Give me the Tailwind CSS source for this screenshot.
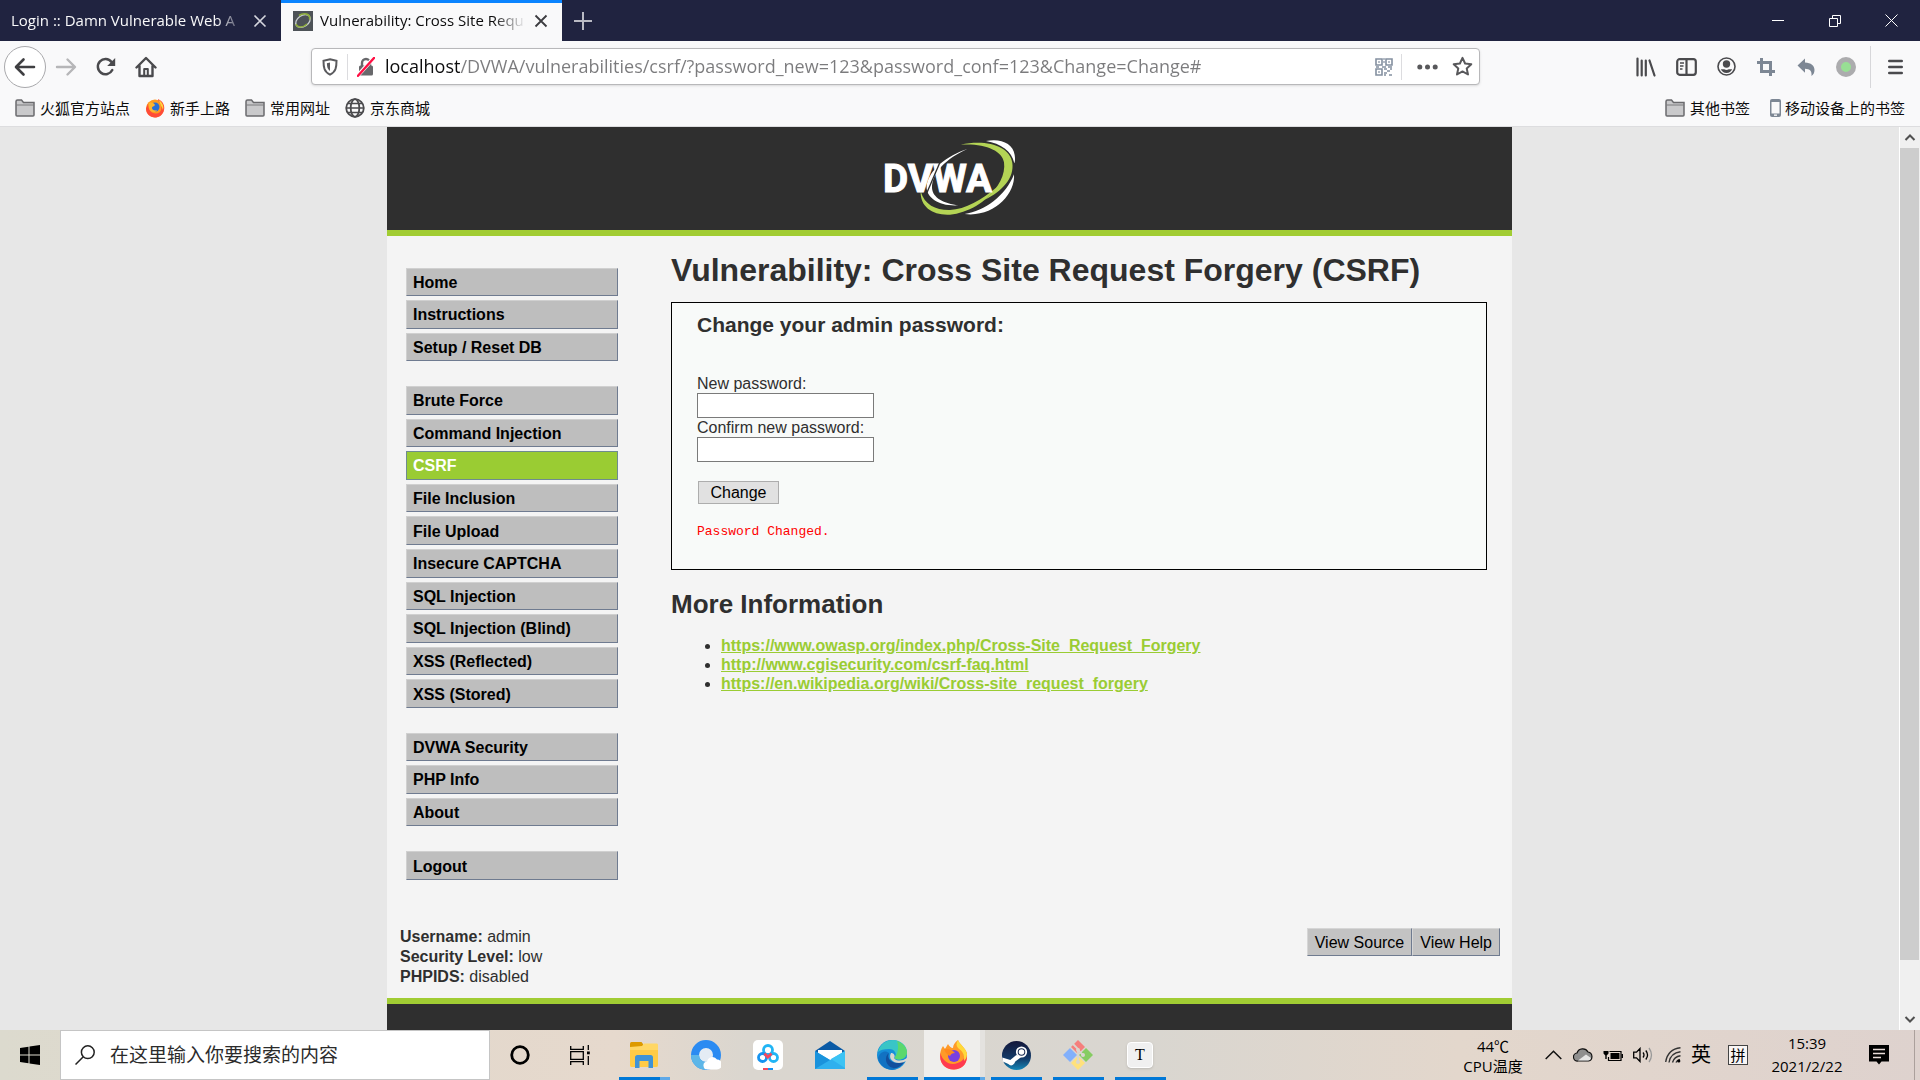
<!DOCTYPE html>
<html lang="zh-CN">
<head>
<meta charset="utf-8">
<title>Vulnerability: Cross Site Request Forgery (CSRF)</title>
<script src="https://cdn.jsdelivr.net/npm/@tailwindcss/browser@4"></script>
</head>
<body class="flex h-screen flex-col overflow-hidden bg-[#f9f9fa] font-['Open_Sans','Noto_Sans_CJK_SC',sans-serif] text-[15px] text-[#0c0c0d]">

<!-- Tab strip -->
<header class="shrink-0">
  <div class="flex h-[41px] items-stretch bg-[#202340] text-[#f9f9fa]">
    <div class="flex w-[281px] items-center pr-[14px] pl-[11px]">
      <span class="flex-1 whitespace-nowrap [mask-image:linear-gradient(to_right,black_88%,transparent)]">Login :: Damn Vulnerable Web A</span>
      <button aria-label="关闭标签页" class="ml-2"><svg class="size-[14px]" viewBox="0 0 14 14" fill="none" stroke="#d5d6de" stroke-width="1.6"><path d="M1.500 1.500l11 11M12.500 1.500l-11 11"/></svg></button>
    </div>
    <div class="flex w-[281px] items-center border-t-[3px] border-[#0a84ff] bg-[#f9f9fa] pr-[14px] pb-[3px] pl-3 text-[#0c0c0d]">
      <svg class="size-5 shrink-0" viewBox="0 0 20 20"><rect width="20" height="20" fill="#4d5257"/><ellipse cx="10" cy="10" rx="8" ry="5.500" transform="rotate(-35 10 10)" fill="none" stroke="#c9ced0" stroke-width="1.300"/><path d="M6 4.500C11 1 18 3 16.500 8.500" fill="none" stroke="#8fae3c" stroke-width="1.600"/><path d="M3 13c1 4 7 4 11 0" fill="none" stroke="#8fae3c" stroke-width="1.400"/></svg>
      <span class="ml-[7px] flex-1 whitespace-nowrap [mask-image:linear-gradient(to_right,black_84%,transparent)]">Vulnerability: Cross Site Requ</span>
      <button aria-label="关闭标签页" class="ml-2"><svg class="size-[14px]" viewBox="0 0 14 14" fill="none" stroke="#3c3c40" stroke-width="1.800"><path d="M1.500 1.500l11 11M12.500 1.500l-11 11"/></svg></button>
    </div>
    <button aria-label="新建标签页" class="px-3"><svg class="size-[18px]" viewBox="0 0 18 18" stroke="#b9bac4" stroke-width="2"><path d="M9 0v18M0 9h18"/></svg></button>
    <div class="ml-auto flex">
      <button aria-label="最小化" class="grid w-[57px] place-items-center"><svg class="size-3" viewBox="0 0 12 12" stroke="#fff"><path d="M0 5.500h12"/></svg></button>
      <button aria-label="还原" class="grid w-[57px] place-items-center"><svg class="size-3" viewBox="0 0 12 12" fill="none" stroke="#fff"><path d="M.5 3.500h8v8h-8zM3.500 3.500v-3h8v8h-3"/></svg></button>
      <button aria-label="关闭" class="grid w-[57px] place-items-center"><svg class="size-[13px]" viewBox="0 0 13 13" stroke="#fff"><path d="M.5.5l12 12M12.500.5l-12 12"/></svg></button>
    </div>
  </div>

  <!-- Navigation toolbar -->
  <div class="flex h-[51px] items-center pl-1">
    <button aria-label="后退" class="grid size-[42px] place-items-center rounded-full border border-[#a9a9ac] bg-white"><svg class="h-5 w-[22px]" viewBox="0 0 22 20" fill="none" stroke="#3f3f42" stroke-width="2.600" stroke-linecap="round" stroke-linejoin="round"><path d="M20 10H2.500M9.500 2.500L2 10l7.500 7.500"/></svg></button>
    <button aria-label="前进" class="grid w-10 place-items-center"><svg class="h-5 w-[22px]" viewBox="0 0 22 20" fill="none" stroke="#b6b6b8" stroke-width="2.400" stroke-linecap="round" stroke-linejoin="round"><path d="M2 10h17.500M12.500 2.500L20 10l-7.500 7.500"/></svg></button>
    <button aria-label="重新载入" class="grid w-10 place-items-center"><svg class="size-5" viewBox="0 0 20 20"><path d="M16.300 13A7.600 7.600 0 1 1 15.500 5" fill="none" stroke="#4a4a4d" stroke-width="2.500" stroke-linecap="round"/><path d="M19.200 1v8h-8z" fill="#4a4a4d"/></svg></button>
    <button aria-label="主页" class="grid w-10 place-items-center"><svg class="size-[22px]" viewBox="0 0 22 22" fill="none" stroke="#4a4a4d" stroke-width="2.400" stroke-linecap="round" stroke-linejoin="round"><path d="M1.500 11.500L11 2l9.500 9.500M4.500 10v10h13V10"/><path d="M9.200 20v-7h3.600v7" stroke-width="2"/></svg></button>
    <div class="mr-[146px] ml-[145px] flex h-[37px] flex-1 items-center rounded-sm border border-[#b8b8ba] bg-white px-[10px] shadow-sm">
      <svg class="h-[18px] w-4" viewBox="0 0 16 18"><path d="M8 1.200l6.500 1.500c0 6.500-.5 11-6.500 14C2 13.700 1.500 9.200 1.500 2.700z" fill="none" stroke="#5a5a5d" stroke-width="2"/><path d="M8 4.500v8.500c-2.500-1.800-3-4-3.100-7.800z" fill="#5a5a5d"/></svg>
      <span class="mx-[9px] h-[26px] w-px bg-[#dcdcdf]"></span>
      <svg class="h-5 w-[18px]" viewBox="0 0 18 20"><path d="M5 9V6a4 4 0 0 1 8 0v3" fill="none" stroke="#68686b" stroke-width="2.400"/><rect x="2" y="8.500" width="14" height="10" rx="1.500" fill="#68686b"/><path d="M.8 18.500L16.800.8" stroke="#fff" stroke-width="4"/><path d="M1 18.800L17 1" stroke="#ff0f43" stroke-width="2.400" stroke-linecap="round"/></svg>
      <!-- The host part of the address is darker than the path -->
      <input type="text" aria-label="地址栏" spellcheck="false" value="localhost/DVWA/vulnerabilities/csrf/?password_new=123&amp;password_conf=123&amp;Change=Change#" class="ml-[10px] h-[26px] min-w-0 flex-1 bg-[linear-gradient(to_right,#0c0c0d_76px,#7b7b7d_76px)] bg-clip-text text-[18px] text-transparent outline-none">
      <svg class="size-[18px]" viewBox="0 0 18 18" fill="none" stroke="#8490a0" stroke-width="1.600"><path d="M1 1h6v6H1zM11 1h6v6h-6zM1 11h6v6H1z"/><path d="M3.200 4h1.600M13.200 4h1.600M3.200 14h1.600M8.200 1h1.600M8.200 4h1.600M7 9h4M1 9h3M13 9h4M9 11h3M12 13h3M9 15h3M14 17h3M15 11h2M9 17h2"/></svg>
      <span class="mr-[15px] ml-2 h-[26px] w-px bg-[#dcdcdf]"></span>
      <button aria-label="页面操作"><svg class="h-[6px] w-[21px]" viewBox="0 0 21 6" fill="#58585b"><circle cx="2.800" cy="3" r="2.500"/><circle cx="10.500" cy="3" r="2.500"/><circle cx="18.200" cy="3" r="2.500"/></svg></button>
      <button aria-label="收藏" class="-mr-1 ml-[14px]"><svg class="size-[21px]" viewBox="0 0 21 21" fill="none" stroke="#58585b" stroke-width="2" stroke-linejoin="round"><path d="M10.500 1.800l2.600 5.700 6.200.7-4.600 4.200 1.300 6.100-5.500-3.100L5 18.500l1.300-6.100L1.700 8.200l6.200-.7z"/></svg></button>
    </div>
    <div class="mr-1 flex items-center">
      <button aria-label="书库" class="grid w-10 place-items-center"><svg class="size-5" viewBox="0 0 20 20" stroke="#4a4a4d" stroke-width="2.200" stroke-linecap="round"><path d="M1.500 1.500v17M5.700 3.500v15M9.800 3.500v15M13.500 3.500l5 15"/></svg></button>
      <button aria-label="侧栏" class="grid w-10 place-items-center"><svg class="h-[18px] w-[21px]" viewBox="0 0 21 18" fill="none" stroke="#4a4a4d" stroke-width="2.200"><rect x="1.200" y="1.200" width="18.600" height="15.600" rx="2.500"/><path d="M10.500 1v16"/><path d="M4 5h4M4 8h3.500M4 11h2.500" stroke-width="1.300"/></svg></button>
      <button aria-label="账户" class="grid w-10 place-items-center"><svg class="size-[19px]" viewBox="0 0 19 19"><circle cx="9.500" cy="9.500" r="8.500" fill="none" stroke="#4a4a4d" stroke-width="1.600"/><circle cx="9.500" cy="7" r="3.700" fill="#4a4a4d"/><path d="M3.800 12.300h3.500a4 4 0 0 0 4.400 0h3.500a6.300 6.300 0 0 1-11.400 0z" fill="#4a4a4d"/></svg></button>
      <button aria-label="截图" class="grid w-10 place-items-center"><svg class="size-[18px]" viewBox="0 0 18 18" fill="none" stroke="#7d8794" stroke-width="3"><path d="M4.500 0v13.500H18M0 4.500h13.500V18"/></svg></button>
      <button aria-label="撤销" class="grid w-10 place-items-center"><svg class="size-[18px]" viewBox="0 0 18 18" fill="#7d8794"><path d="M8 .5v4c6 .3 9.500 3 9.500 7.500 0 2.500-1 4.500-3 6 .5-5-1.500-7-6.500-7.200v4L.5 7.500z"/></svg></button>
      <button aria-label="扩展" class="grid w-10 place-items-center"><span class="size-5 rounded-full border-[5px] border-[#acacae] bg-[#98df94]"></span></button>
    </div>
    <button aria-label="菜单" class="grid h-[42px] w-[50px] place-items-center border-l border-[#d7d7da]"><svg class="h-4 w-[15px]" viewBox="0 0 15 16" stroke="#4a4a4d" stroke-width="2.400" stroke-linecap="round"><path d="M1.200 2h12.600M1.200 8h12.600M1.200 14h12.600"/></svg></button>
  </div>

  <!-- Bookmarks bar -->
  <nav aria-label="书签" class="flex h-[35px] items-center border-b border-[#dddddf] pr-[15px] pb-[2px] pl-[15px] whitespace-nowrap">
    <a href="#" class="flex items-center gap-[5px]"><svg class="h-[18px] w-5" viewBox="0 0 20 18"><path d="M1 16V2.500Q1 1 2.500 1h4L8.500 3.500H19V16q0 1-1 1H2q-1 0-1-1z" fill="#c9c9cb" stroke="#6a6a6d" stroke-width="1.500"/><path d="M1 6h18" stroke="#7a7a7d"/></svg>火狐官方站点</a>
    <a href="#" class="ml-[15px] flex items-center gap-[5px]"><svg class="size-5" viewBox="0 0 20 20"><circle cx="10" cy="10.500" r="9" fill="#ff9a1f"/><path d="M13 1c5 2 7 7 6 11-1 5-5 7.500-9 7.500-5 0-9-3.500-9-9l2-5c0 6 3 10 8 10s6-5 5-8-3-4-3-6.500z" fill="#ff4b38"/><path d="M14 2c4 3 5 7 4 10-1-4-3-5-4-10z" fill="#ffd83a"/><circle cx="10" cy="9" r="4.500" fill="#2a6fd6"/><path d="M4 5c3-1 5 0 6 2-1 2-3 1-3 3s3 3 5 2c-1 3-7 3-8-2z" fill="#ffb52e"/></svg>新手上路</a>
    <a href="#" class="ml-[15px] flex items-center gap-[5px]"><svg class="h-[18px] w-5" viewBox="0 0 20 18"><path d="M1 16V2.500Q1 1 2.500 1h4L8.500 3.500H19V16q0 1-1 1H2q-1 0-1-1z" fill="#c9c9cb" stroke="#6a6a6d" stroke-width="1.500"/><path d="M1 6h18" stroke="#7a7a7d"/></svg>常用网址</a>
    <a href="#" class="ml-[15px] flex items-center gap-[5px]"><svg class="size-5" viewBox="0 0 20 20" fill="none" stroke="#4a4a4d" stroke-width="1.800"><circle cx="10" cy="10" r="8.800"/><ellipse cx="10" cy="10" rx="4.300" ry="8.800"/><path d="M1.200 10h17.600M3 5.500h14M3 14.500h14" stroke-width="1.300"/></svg>京东商城</a>
    <a href="#" class="ml-auto flex items-center gap-[5px]"><svg class="h-[18px] w-5" viewBox="0 0 20 18"><path d="M1 16V2.500Q1 1 2.500 1h4L8.500 3.500H19V16q0 1-1 1H2q-1 0-1-1z" fill="#c9c9cb" stroke="#6a6a6d" stroke-width="1.500"/><path d="M1 6h18" stroke="#7a7a7d"/></svg>其他书签</a>
    <a href="#" class="ml-5 flex items-center gap-1"><svg class="h-[18px] w-[11px]" viewBox="0 0 11 18"><rect width="11" height="18" rx="2" fill="#7d8794"/><rect x="1.500" y="3" width="8" height="11.500" fill="#f9f9fa"/><rect x="4" y="15.500" width="3" height="1.300" fill="#fff"/></svg>移动设备上的书签</a>
  </nav>
</header>

<!-- Page viewport -->
<div class="flex min-h-0 flex-1 bg-[#e7e7e7]">
  <div class="min-w-0 flex-1 overflow-hidden font-['Liberation_Sans',Arial,sans-serif] text-base text-[#2f2f2f]">
    <div class="mx-auto flex min-h-full max-w-[1125px] flex-col bg-[#f4f4f4]">
      <div class="flex h-[109px] items-start justify-center border-b-[6px] border-[#a1cc33] bg-[#2f2f2f] pt-[3px]">
        <svg class="h-[95px] w-[180px]" viewBox="0 0 540 285" role="img" aria-label="DVWA">
          <path d="M322 57C262 76 206 120 200 168c-3 36 40 62 96 58-44-5-78-22-80-52-2-44 44-90 106-117z" fill="#fff"/>
          <path d="M378 33c42-9 82 6 86 42 2 12 1 20-1 25-7-36-41-60-85-67z" fill="#fff"/>
          <path d="M462 133c5 60-62 130-148 119 60-8 124-56 148-119z" fill="#fff"/>
          <path d="M302 44c78-16 148 4 155 55 6 46-30 84-82 110 42-36 62-76 57-112-5-36-60-58-130-53z" fill="#b4d455"/>
          <path d="M182 184c-2 48 38 73 88 70 52-4 110-38 140-82-44 38-94 66-140 68-42 1-76-14-88-56z" fill="#b4d455"/>
          <text x="69" y="185" font-size="116" font-weight="700" fill="#fff" stroke="#fff" stroke-width="3" font-family="Roboto,'Liberation Sans',sans-serif">DVWA</text>
          <path d="M239 99L200 190" stroke="#2f2f2f" stroke-width="4"/>
        </svg>
      </div>

      <div class="flex pt-8">
        <nav aria-label="DVWA" class="ml-[19px] flex w-[212px] shrink-0 flex-col gap-[25px] font-bold text-black [&_a]:flex [&_a]:flex-1 [&_a]:items-center [&_a]:border [&_a]:border-t-[#d0d0d0] [&_a]:border-r-[#6f7b90] [&_a]:border-b-[#6f7b90] [&_a]:border-l-[#d0d0d0] [&_a]:bg-[#bebebe] [&_a]:px-[6px] [&_a]:pt-[2px] [&_a]:leading-6 [&_div]:flex [&_div]:flex-col [&_div]:gap-1">
          <div class="h-[93px]">
            <a href="#">Home</a>
            <a href="#">Instructions</a>
            <a href="#">Setup / Reset DB</a>
          </div>
          <div class="h-[322px]">
            <a href="#">Brute Force</a>
            <a href="#">Command Injection</a>
            <a href="#" aria-current="page" class="border-[#6f8b90]! bg-[#9acc33]! text-white">CSRF</a>
            <a href="#">File Inclusion</a>
            <a href="#">File Upload</a>
            <a href="#">Insecure CAPTCHA</a>
            <a href="#">SQL Injection</a>
            <a href="#">SQL Injection (Blind)</a>
            <a href="#">XSS (Reflected)</a>
            <a href="#">XSS (Stored)</a>
          </div>
          <div class="h-[93px]">
            <a href="#">DVWA Security</a>
            <a href="#">PHP Info</a>
            <a href="#">About</a>
          </div>
          <div class="h-[29px]">
            <a href="#">Logout</a>
          </div>
        </nav>

        <main class="-mt-[18px] mr-[25px] ml-[53px] min-w-0 flex-1">
          <h1 class="text-[32px] leading-10 font-bold">Vulnerability: Cross Site Request Forgery (CSRF)</h1>
          <section class="mt-3 border border-black bg-[#f8faf9] px-[25px] pt-[10px] pb-[27px]">
            <h3 class="text-[21px] leading-6 font-bold">Change your admin password:</h3>
            <form class="mt-[37px] flex flex-col items-start">
              <label for="pw-new" class="leading-[19px]">New password:</label>
              <input id="pw-new" type="password" class="h-[25px] w-[177px] border border-[#7a7a7a] bg-white px-1">
              <label for="pw-conf" class="leading-[19px]">Confirm new password:</label>
              <input id="pw-conf" type="password" class="h-[25px] w-[177px] border border-[#7a7a7a] bg-white px-1">
              <button type="button" class="mt-[19px] ml-px h-[23px] w-[81px] border border-[#adadad] bg-[#e1e1e1] pt-px leading-5 text-black">Change</button>
            </form>
            <pre class="mt-[18px] font-['Liberation_Mono',monospace] text-[13px] leading-5 text-[#ff0000]">Password Changed.</pre>
          </section>
          <h2 class="mt-[18px] text-[26px] leading-8 font-bold">More Information</h2>
          <ul class="mt-4 list-disc pl-[50px] leading-[19px] [&_a]:font-bold [&_a]:text-[#9acc33] [&_a]:underline">
            <li><a href="#">https://www.owasp.org/index.php/Cross-Site_Request_Forgery</a></li>
            <li><a href="#">http://www.cgisecurity.com/csrf-faq.html</a></li>
            <li><a href="#">https://en.wikipedia.org/wiki/Cross-site_request_forgery</a></li>
          </ul>
        </main>
      </div>

      <div class="mt-[47px] flex items-start justify-between pr-3 pb-[11px] pl-[13px]">
        <p class="leading-5"><b>Username:</b> admin<br><b>Security Level:</b> low<br><b>PHPIDS:</b> disabled</p>
        <div class="mt-px flex text-black [&_button]:h-7 [&_button]:border [&_button]:border-t-[#d6d6d6] [&_button]:border-r-[#6f7b90] [&_button]:border-b-[#6f7b90] [&_button]:border-l-[#d6d6d6] [&_button]:bg-[#c3c3c3] [&_button]:px-[7px] [&_button]:pt-px">
          <button type="button">View Source</button>
          <button type="button">View Help</button>
        </div>
      </div>
      <div class="min-h-6 flex-1 border-t-[6px] border-[#a1cc33] bg-[#2f2f2f]"></div>
    </div>
  </div>
  <!-- Scrollbar -->
  <div class="flex w-[21px] flex-col items-stretch border-l border-white bg-[#f0f0f0]">
    <svg class="h-[21px] w-5" viewBox="0 0 20 21" fill="none" stroke="#505050" stroke-width="2"><path d="M5.500 13l4.500-4.500 4.500 4.500"/></svg>
    <div class="mr-px flex-[812] bg-[#cdcdcd]"></div>
    <div class="flex-[49]"></div>
    <svg class="h-[21px] w-5" viewBox="0 0 20 21" fill="none" stroke="#505050" stroke-width="2"><path d="M5.500 8l4.500 4.500 4.500-4.500"/></svg>
  </div>
</div>

<!-- Taskbar -->
<footer class="flex h-[50px] shrink-0 items-stretch bg-[linear-gradient(to_right,#dcdace_0%,#e2d8cc_20%,#e6d9cd_32%,#dad6cf_39%,#d9d6d0_60%,#e3d7cc_76%,#ded2ce_100%)] text-black">
  <button aria-label="开始" class="grid w-[60px] place-items-center"><svg class="size-5" viewBox="0 0 20 20"><path d="M0 3l8.500-1.300v7.800H0zM9.500 1.500L20 0v9.500H9.500zM0 10.500h8.500v7.800L0 17zM9.500 10.500H20V20L9.500 18.500z"/></svg></button>
  <label class="flex w-[430px] items-center border border-[#c5c5c5] bg-white pl-[14px]">
    <svg class="size-5" viewBox="0 0 20 20" fill="none" stroke="#222" stroke-width="1.500"><circle cx="12.800" cy="7.200" r="6.400"/><path d="M8.300 11.700L.5 19.500"/></svg>
    <input type="text" aria-label="搜索" placeholder="在这里输入你要搜索的内容" class="ml-[15px] min-w-0 flex-1 text-[19px] outline-none placeholder:text-[#2b2b2b]">
  </label>
  <div class="flex [&_button]:relative [&_button]:grid [&_button]:w-[62px] [&_button]:place-items-center">
    <button aria-label="Cortana" class="w-[61px]! pr-px"><svg class="size-5" viewBox="0 0 20 20" fill="none" stroke="#000" stroke-width="2.800"><circle cx="10" cy="10" r="8.300"/></svg></button>
    <button aria-label="任务视图" class="pr-1"><svg class="size-5" viewBox="0 0 20 20" fill="none" stroke="#000" stroke-width="1.300"><path d="M.7 1v3.300h12.600V1M.7 6.700h12.600v7.600H.7zM.7 20v-3.300h12.600V20M18.300 0v5M18.300 11v9"/><path d="M17 6.500h2.800v2.800H17z" fill="#000" stroke="none"/></svg></button>
    <button aria-label="文件资源管理器"><svg class="h-[26px] w-7" viewBox="0 0 28 26"><path d="M0 1.500Q0 0 1.500 0h10L13 2v3H0z" fill="#dd9a00"/><path d="M0 5l12-1 2-2.500h13Q28 1.500 28 3v20q0 2-2 2H2q-2 0-2-2z" fill="#ffd765"/><path d="M0 8h28v15q0 2-2 2H2q-2 0-2-2z" fill="#ffcb45"/><path d="M5 26V15.500Q5 13 7.500 13h13q2.500 0 2.500 2.500V26h-4.500v-7h-9v7z" fill="#3f93d6"/></svg><span class="absolute bottom-0 left-[6px] h-[3px] w-[51px] border-r-[10px] border-[#5fa9e8] bg-[#0078d7]"></span></button>
    <button aria-label="QQ浏览器"><svg class="size-[30px]" viewBox="0 0 30 30"><circle cx="15" cy="15" r="11" fill="#e4ecf4" stroke="#2b8bf2" stroke-width="8"/><path d="M4 15a11 11 0 0 0 11 11" fill="none" stroke="#5db6e8" stroke-width="8"/><path d="M17 29.500a4 4 0 0 1-1-8 5.500 5.500 0 0 1 10-2 5 5 0 0 1 0 10z" fill="#fff"/></svg></button>
    <button aria-label="百度网盘"><svg class="size-[30px]" viewBox="0 0 30 30"><rect width="30" height="30" rx="5" fill="#fff"/><g fill="none" stroke-width="2.800"><circle cx="15" cy="10" r="4.500" stroke="#21b5f5"/><circle cx="9.500" cy="17.500" r="4" stroke="#1593f0"/><circle cx="20.500" cy="17.500" r="4" stroke="#21b5f5"/><path d="M11.500 13.500l4 4.500M18.500 13.500l-4 4" stroke="#f4485d"/></g><path d="M10 28h5v2h-5z" fill="#f4485d"/><path d="M15 28h5v2h-5z" fill="#1593f0"/></svg></button>
    <button aria-label="邮件"><svg class="h-7 w-[30px]" viewBox="0 0 30 28"><path d="M0 10L15 0l15 10v18H0z" fill="#0a5aa5"/><path d="M3 9h24v10H3z" fill="#fff"/><path d="M0 10l15 9 15-9v18H0z" fill="#2fb0ee"/><path d="M0 28l15-9L0 10z" fill="#1a93dc"/><path d="M16 18l14 9V10z" fill="#3cc3f4"/></svg></button>
    <button aria-label="Microsoft Edge"><svg class="size-[30px]" viewBox="0 0 30 30"><circle cx="15" cy="15" r="15" fill="#168fd8"/><path d="M1 12C3 4 9 0 16 0c8 0 14 6 14 12 0 5-4 7.500-8 7.500-3 0-5-1-4-2.500 2-3 0-8-6-8C7 9 3 10 1 12z" fill="#39c5c6"/><path d="M20 1c6 2 10 7 10 11 0 5-4 7.500-8 7.500-3 0-5-1-4-2.500 3-4 4-10 2-16z" fill="#5bd86c"/><path d="M12 13c-5 5-1 15 8 16-9 3-18-3-19-11C3 11 9 10 12 13z" fill="#1272c2"/><path d="M12 13c-3 7 5 13 16 8-3 5-8 8-12 7-8-2-9-12-4-15z" fill="#134f9d"/><path d="M14 13c3 0 4 2.500 3.500 4-1 1.500 1 3.500 5 3.500 3 0 5-.8 7.500-2.500v3l-2 .5c-8 4-18-1-14-8.500z" fill="#dad6cf"/></svg><span class="absolute bottom-0 left-[6px] h-[3px] w-[51px] bg-[#0078d7]"></span></button>
    <button aria-label="Firefox"><span class="absolute inset-y-0 left-px w-[61px] border-r-[5px] border-[#e4e2df] bg-[#efeeec]"></span><svg class="relative size-[30px]" viewBox="0 0 30 30"><path d="M19 0c1 4 8 8 9 14 1 9-5 15.500-13 15.500S1 24 1 16c0-4 1-7 3-10l2 3 3-5c1 2 3 4 5 4 0-3 2-6 5-8z" fill="#ff9a28"/><path d="M1.500 13c2 9 10 13 17 10 6-2 8-6 8.500-11 3 9-2 17.500-12 17.500S0 22 1.500 13z" fill="#ff3a50"/><path d="M19 0c1 4 8 8 9 14 0 4-2 6-3 7 1-7-2-10-6-13-2-2-2-5 0-8z" fill="#ffd93a"/><circle cx="15" cy="16" r="6" fill="#7a3fe0"/><path d="M5 9c5-1 8 1 11 4-3 0-4 1-5 3-3-1-5-4-6-7z" fill="#ff8a1e"/></svg><span class="absolute bottom-0 left-px h-[3px] w-[61px] border-r-[5px] border-[#5fa9e8] bg-[#0078d7]"></span></button>
    <button aria-label="Steam"><svg class="size-[29px]" viewBox="0 0 29 29"><defs><linearGradient id="steam" x2="0" y2="1"><stop stop-color="#14173a"/><stop offset=".6" stop-color="#123a68"/><stop offset="1" stop-color="#1387b8"/></linearGradient></defs><circle cx="14.500" cy="14.500" r="14.500" fill="url(#steam)"/><path d="M.3 16.500l8 2.500 6-5 5 2-6 4.500-1 2q-3 3.500-6 .5l-5.500-2.500z" fill="#fff"/><circle cx="19.500" cy="11" r="4.700" fill="#14274f" stroke="#fff" stroke-width="1.800"/><circle cx="19.500" cy="11" r="2.800" fill="#fff"/></svg><span class="absolute bottom-0 left-[6px] h-[3px] w-[51px] bg-[#0078d7]"></span></button>
    <button aria-label="Git"><svg class="size-[30px]" viewBox="0 0 30 30"><path d="M15 0l7 7-7 7-7-7z" fill="#f57f7c"/><path d="M23 8l7 7-7 7-7-7z" fill="#86cc62"/><path d="M7 8l7 7-7 7-7-7z" fill="#82b0fb"/><path d="M15 16l7 7-7 7-7-7z" fill="#ffe17c"/><path d="M10 4l5 5v14M15 10l5 5" fill="none" stroke="#dad6cf" stroke-width="1.800"/><circle cx="15" cy="10" r="2" fill="#dad6cf"/><circle cx="20" cy="15" r="2" fill="#dad6cf"/><circle cx="15" cy="22" r="2" fill="#dad6cf"/></svg><span class="absolute bottom-0 left-[6px] h-[3px] w-[51px] bg-[#0078d7]"></span></button>
    <button aria-label="Typora"><span class="grid size-[26px] place-items-center rounded-sm border border-white bg-[#f0f0f0] font-['Liberation_Serif',serif] text-base shadow-sm">T</span><span class="absolute bottom-0 left-[6px] h-[3px] w-[51px] bg-[#0078d7]"></span></button>
  </div>
  <div class="ml-auto flex items-stretch text-center whitespace-nowrap [&_svg]:m-auto">
    <div class="w-[90px] pt-[6px] leading-5">44℃<br>CPU温度</div>
    <div class="flex w-[30px]"><svg class="h-[10px] w-[17px]" viewBox="0 0 17 10" fill="none" stroke="#111" stroke-width="1.500"><path d="M.7 9l7.800-7.800L16.300 9"/></svg></div>
    <div class="flex w-[30px]"><svg class="h-[14px] w-5" viewBox="0 0 20 14"><path d="M5 13a4 4 0 0 1-1-8 6 6 0 0 1 11-1 4.600 4.600 0 0 1 .5 9z" fill="#8f8f8f" stroke="#111" stroke-width="1.200"/><path d="M5 12.400l8-6 5 3.500q-.5 2.500-3 2.500z" fill="#e6e6e6"/></svg></div>
    <div class="flex w-[30px]"><svg class="h-[15px] w-5" viewBox="0 0 20 15"><path d="M6.500 3.500H18v9H5.500V9" fill="none" stroke="#000" stroke-width="1.200"/><path d="M7.500 5H16.500v6h-9zM18.500 6h1.500v4h-1.500z"/><path d="M1.500 0v3M4.500 0v3M.5 3h5v2.500L3.700 7.500V11H2.300V7.500L.5 5.500z"/></svg></div>
    <div class="flex w-[30px]"><svg class="h-4 w-5" viewBox="0 0 20 16" fill="none" stroke="#000" stroke-width="1.300"><path d="M.7 5.200h2.800L7 1.500v13L3.500 10.800H.7zM10 5.500q2 2.500 0 5M12.800 3.500q3.500 4.500 0 9"/><path d="M16 1q5 7 0 14" stroke="#999"/></svg></div>
    <div class="flex w-[30px]"><svg class="size-4" viewBox="0 0 16 16" fill="none" stroke="#333" stroke-width="1.400"><path d="M.7 15C2 7 7 1.700 15.500.8M4 15.500C5 9.500 9 5.500 15.500 4.800M7.500 15.500C8.500 12 11 9.500 15.500 8.800M11 15.500q1-2.500 4-3"/><circle cx="13.800" cy="14" r="1.600" fill="#000" stroke="none"/></svg></div>
    <div class="w-[26px] text-[20px] leading-[50px]">英</div>
    <div class="flex w-11 pl-1"><span class="m-auto size-5 border border-[#444] bg-white/80 text-[15px] leading-[18px]">拼</span></div>
    <div class="w-[98px] pt-[2px] leading-[23px]">15:39<br>2021/2/22</div>
    <button aria-label="通知" class="mr-3 flex w-[46px]"><svg class="h-5 w-5" viewBox="0 0 20 20"><path d="M0 0h20v16.500h-7.500L10 19.500l-2.500-3H0z"/><path d="M4 4.500h12M4 8.500h12M4 12.500h8" stroke="#e8dcd8" stroke-width="1.300"/></svg></button>
    <div class="w-[6px] border-l border-[#aba09c]"></div>
  </div>
</footer>
</body>
</html>
